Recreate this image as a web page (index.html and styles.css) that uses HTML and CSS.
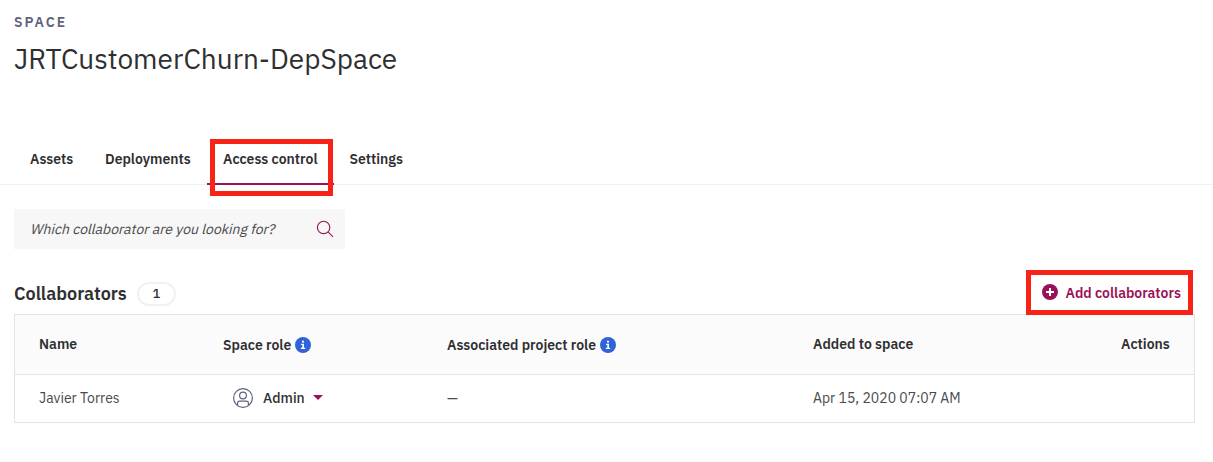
FILE: index.html
```html
<!DOCTYPE html>
<html lang="en">
<head>
<meta charset="utf-8">
<title>JRTCustomerChurn-DepSpace</title>
<link rel="stylesheet" href="styles.css">
</head>
<body>
<header class="page-header">
  <div class="eyebrow">SPACE</div>
  <h1 class="title">JRTCustomerChurn-DepSpace</h1>
</header>
<nav class="tabs">
  <a class="tab tab-assets">Assets</a>
  <a class="tab tab-deployments">Deployments</a>
  <a class="tab tab-access active">Access control<span class="highlight highlight-tab"></span></a>
  <a class="tab tab-settings">Settings</a>
</nav>
<main class="content">
  <div class="search">
    <span class="search-text">Which collaborator are you looking for?</span>
    <svg class="search-icon" width="18" height="18" viewBox="0 0 18 18" fill="none" stroke="#9b1159" stroke-width="1.1"><circle cx="7.6" cy="7.4" r="6.2"/><path d="M12 11.8 17 16.8"/></svg>
  </div>
  <div class="section-head">
    <h2 class="section-title">Collaborators</h2>
    <span class="count">1</span>
    <a class="add">
      <svg class="add-icon" width="16" height="16" viewBox="0 0 16 16"><circle cx="8" cy="8" r="8" fill="#9b1159"/><path d="M8 4v8M4 8h8" stroke="#fff" stroke-width="2"/></svg>
      <span class="add-text">Add collaborators</span>
      <span class="highlight highlight-add"></span>
    </a>
  </div>
  <div class="table">
    <div class="row head">
      <span class="h-name">Name</span>
      <span class="with-info"><span class="h-role">Space role</span><svg width="16" height="16" viewBox="0 0 16 16"><circle cx="8" cy="8" r="8" fill="#3064d6"/><path d="M7 3.8h2v1.6H7zM6.1 6.7H9v4.1h1.2V12H5.8v-1.2h1.5V7.9H6.1z" fill="#fff"/></svg></span>
      <span class="with-info"><span class="h-project">Associated project role</span><svg width="16" height="16" viewBox="0 0 16 16"><circle cx="8" cy="8" r="8" fill="#3064d6"/><path d="M7 3.8h2v1.6H7zM6.1 6.7H9v4.1h1.2V12H5.8v-1.2h1.5V7.9H6.1z" fill="#fff"/></svg></span>
      <span class="h-added">Added to space</span>
      <span class="h-actions">Actions</span>
    </div>
    <div class="row">
      <span class="c-name">Javier Torres</span>
      <span class="role">
        <svg width="20" height="20" viewBox="0 0 20 20" fill="none" stroke="#5f637e" stroke-width="1.2"><circle cx="10" cy="10" r="9.4"/><circle cx="10" cy="7.5" r="3.4"/><path d="M4.6 17.4v-2.2q0-2 2-2h6.8q2 0 2 2v2.2"/></svg>
        <span class="c-role">Admin</span>
        <svg class="caret" width="10" height="5" viewBox="0 0 10 5"><path d="M0 0h10L5 5z" fill="#9b1159"/></svg>
      </span>
      <span class="c-dash">—</span>
      <span class="c-date">Apr 15, 2020 07:07 AM</span>
      <span></span>
    </div>
  </div>
</main>
</body>
</html>
```
FILE: styles.css
```css
* { box-sizing: border-box; }
body {
  margin: 0;
  background: #fff;
  color: #2f2f31;
  font-family: "IBM Plex Sans", Roboto, sans-serif;
  font-size: 14px;
  line-height: 18px;
  white-space: nowrap;
}
.page-header { height: 134px; padding: 13px 14px 0; }
.eyebrow { color: #5f637e; font-size: 14px; font-weight: 600; letter-spacing: 2px; }
.title { margin: 10px 0 0; font-size: 28px; line-height: 36px; font-weight: 400; }
.tabs { display: flex; height: 51px; padding-left: 14px; border-bottom: 1px solid #efefef; font-weight: 600; }
.tab { position: relative; height: 51px; padding: 16px 0 0 16px; }
.tab-assets { width: 75px; }
.tab-deployments { width: 118px; }
.tab-access { width: 127px; }
.tab-settings { padding-left: 15.5px; }
.active { border-bottom: 2px solid #9b1159; }
.highlight { position: absolute; border: 5px solid #f82317; pointer-events: none; }
.highlight-tab { left: 3px; top: 5px; width: 123px; height: 57px; }
.content { padding: 24px 18px 0 14px; }
.search { display: flex; align-items: center; justify-content: space-between; width: 331px; height: 40px; padding: 0 11px 0 16px; background: #f7f7f7; color: #4a4a4c; }
.search-text { transform: skewX(-14deg); transform-origin: 0 14px; }
.section-head { display: flex; align-items: center; height: 45px; margin-top: 21px; }
.section-title { width: 123px; margin: 2px 0 0; font-size: 18px; line-height: 24px; font-weight: 600; }
.count { width: 39px; height: 24px; margin-top: 2px; border: 2px solid #f1f1f1; border-radius: 12px; text-align: center; font-size: 13px; line-height: 20px; font-weight: 500; }
.add { position: relative; display: flex; align-items: center; width: 167px; height: 45px; margin-left: auto; margin-right: 2px; padding-left: 16px; gap: 7.5px; color: #9b1159; font-weight: 600; }
.add-icon { margin-bottom: 1px; }
.add-text { margin-top: 1px; }
.highlight-add { inset: 0; }
.table { height: 109px; margin-top: -1px; border: 1px solid #e4e4e4; }
.row { display: grid; grid-template-columns: 184px 224px 366px 308px 1fr; align-items: center; height: 47px; padding: 0 0 2px 24px; color: #4a4a4c; }
.head { height: 60px; background: #fbfbfb; border-bottom: 1px solid #e4e4e4; font-weight: 600; color: #2f2f31; }
.with-info, .role { display: flex; align-items: center; }
.with-info { gap: 4px; margin-top: 2px; }
.role { padding-left: 10px; color: #2f2f31; font-weight: 500; }
.c-role { width: 50px; margin-left: 10px; }
```
